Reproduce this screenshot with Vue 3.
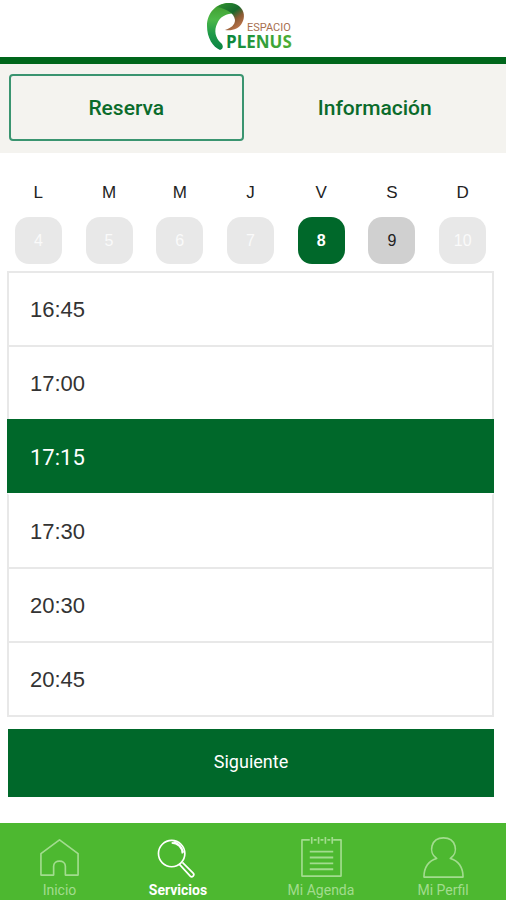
<script setup>
import { ref } from 'vue'

const tab = ref('Reserva')
const tabs = ['Reserva', 'Información']

const day = ref(8)
const days = [
  { letter: 'L', number: 4, open: false },
  { letter: 'M', number: 5, open: false },
  { letter: 'M', number: 6, open: false },
  { letter: 'J', number: 7, open: false },
  { letter: 'V', number: 8, open: true },
  { letter: 'S', number: 9, open: true },
  { letter: 'D', number: 10, open: false },
]

const time = ref('17:15')
const times = ['16:45', '17:00', '17:15', '17:30', '20:30', '20:45']
</script>

<template>
  <div class="app">
    <header class="header">
      <svg class="logo" viewBox="0 0 88 54" role="img" aria-label="Espacio Plenus">
        <defs>
          <linearGradient id="leaf" x1="0" y1="0" x2="0" y2="1">
            <stop offset="0" stop-color="#3f9a2c" />
            <stop offset="0.35" stop-color="#4cb848" />
            <stop offset="0.65" stop-color="#1f9a48" />
            <stop offset="1" stop-color="#0a8444" />
          </linearGradient>
          <linearGradient id="tip" gradientUnits="userSpaceOnUse" x1="14" y1="4" x2="32" y2="28">
            <stop offset="0" stop-color="#2c8c30" />
            <stop offset="0.45" stop-color="#17692c" />
            <stop offset="0.7" stop-color="#8a5a34" />
            <stop offset="1" stop-color="#c0764c" />
          </linearGradient>
          <linearGradient id="word" x1="0" y1="0" x2="1" y2="0">
            <stop offset="0" stop-color="#08843c" />
            <stop offset="0.5" stop-color="#2d9c3c" />
            <stop offset="1" stop-color="#4fae32" />
          </linearGradient>
        </defs>
        <path fill="url(#leaf)" d="M22 3C9 3 0 13 0 26C0 38 6 47 13 50C16 49 17 46 14 43C8 38 7 30 10 24C13 16 19 14 28 13C31 8 29 3 22 3Z" />
        <path fill="url(#tip)" d="M10 7C17 2 27 2 32 6C38 11 38 18 35 23C32 29 25 31 18 30C24 28 28 25 28 20C27 13 20 9 10 7Z" />
        <text class="logo-small" x="40" y="31">ESPACIO</text>
        <text class="logo-big" x="19" y="48" fill="url(#word)">PLENUS</text>
      </svg>
    </header>

    <div class="tabs">
      <button
        v-for="name in tabs"
        :key="name"
        type="button"
        class="tab"
        :class="{ active: tab === name }"
        :aria-pressed="tab === name"
        @click="tab = name"
      >{{ name }}</button>
    </div>

    <main class="main">
      <div class="week">
        <div v-for="d in days" :key="d.number" class="column">
          <span class="letter">{{ d.letter }}</span>
          <button
            type="button"
            class="day"
            :class="{ open: d.open, selected: day === d.number }"
            :disabled="!d.open"
            :aria-pressed="day === d.number"
            @click="day = d.number"
          >{{ d.number }}</button>
        </div>
      </div>

      <ul class="times">
        <li v-for="t in times" :key="t" class="slot" :class="{ selected: time === t }">
          <button
            type="button"
            class="time"
            :aria-pressed="time === t"
            @click="time = t"
          >{{ t }}</button>
        </li>
      </ul>

      <button type="button" class="next">Siguiente</button>
    </main>

    <nav class="nav">
      <a href="#inicio" class="link">
        <svg class="icon" viewBox="0 0 44 44" aria-hidden="true">
          <path d="M3 18L22 4L41 18V40H28V31C28 24 16 24 16 31V40H3Z" />
        </svg>
        <span>Inicio</span>
      </a>
      <a href="#servicios" class="link current" aria-current="page">
        <svg class="icon" viewBox="0 0 44 44" aria-hidden="true">
          <circle cx="15" cy="18" r="13.5" />
          <path d="M15 7C21 7 26 12 26 18M17 6C23 8 26 12 27 17" />
          <path d="M23 29L34 41C36 43 39 40 37 38L26 27" />
        </svg>
        <span>Servicios</span>
      </a>
      <a href="#agenda" class="link">
        <svg class="icon" viewBox="0 0 44 44" aria-hidden="true">
          <path d="M10 4H2V41H42V4H34M14 4H17M21 4H24M28 4H31M12 1V8M19 1V8M26 1V8M33 1V8" />
          <path class="lines" d="M10 16H34M10 22H34M10 28H34M10 34H34" />
        </svg>
        <span>Mi Agenda</span>
      </a>
      <a href="#perfil" class="link">
        <svg class="icon" viewBox="0 0 44 44" aria-hidden="true">
          <path d="M15 23C6 17 9 2 22 2C35 2 38 17 29 23C37 25 42 32 42 42H2C2 32 7 25 15 23Z" />
        </svg>
        <span>Mi Perfil</span>
      </a>
    </nav>
  </div>
</template>

<style>
body {
  margin: 0;
  background: #fff;
}
</style>

<style scoped>
.app {
  display: flex;
  flex-direction: column;
  min-height: 100vh;
  font-family: Roboto, "Liberation Sans", sans-serif;
  color: #222;
}

button {
  margin: 0;
  padding: 0;
  border: 0;
  font: inherit;
  cursor: pointer;
}

.header {
  display: flex;
  justify-content: center;
  padding: 0 4px 3px 0;
  border-bottom: 7px solid #00661b;
}

.logo {
  display: block;
  width: 88px;
  height: 54px;
}

.logo-small {
  font: 400 11px Roboto, sans-serif;
  fill: #a8704f;
}

.logo-big {
  font: 700 17px "Open Sans", sans-serif;
}

.tabs {
  display: grid;
  grid-template-columns: 1fr 1fr;
  gap: 14px;
  padding: 10px 14px 12px 9px;
  background: #f4f3ef;
}

.tab {
  height: 67px;
  border: 2px solid transparent;
  border-radius: 4px;
  background: none;
  font-size: 21px;
  font-weight: 500;
  color: #0a6b2b;
}

.tab.active {
  border-color: #3a9470;
}

.main {
  display: flex;
  flex-direction: column;
  padding: 30px 12px 26px 7px;
}

.week {
  display: grid;
  grid-template-columns: repeat(7, 1fr);
  margin: 0 -4px;
}

.column {
  display: flex;
  flex-direction: column;
  align-items: center;
  gap: 14px;
}

.letter {
  font-family: "Liberation Sans", sans-serif;
  font-size: 17px;
  line-height: 20px;
}

.day {
  width: 47px;
  height: 47px;
  border-radius: 14px;
  background: #e8e8e8;
  font-family: "Liberation Sans", sans-serif;
  font-size: 16px;
  color: #fafafa;
}

.day.open {
  background: #d0d0d0;
  color: #222;
}

.day.selected {
  background: #00682a;
  font-weight: 700;
  color: #fff;
}

.times {
  margin: 7px 0 0;
  padding: 0;
  list-style: none;
  border-bottom: 2px solid #e8e8e8;
}

.time {
  display: block;
  width: 100%;
  height: 74px;
  padding: 1px 21px 0;
  border: 2px solid #e8e8e8;
  border-bottom: 0;
  background: #fff;
  font-family: "Liberation Sans", sans-serif;
  font-size: 22px;
  text-align: left;
  color: #333;
}

.slot.selected .time {
  border-color: #00682a;
  background: #00682a;
  font-family: Roboto, sans-serif;
  color: #fff;
}

.slot.selected + .slot .time {
  border-top-color: #fff;
}

.next {
  height: 68px;
  margin: 12px 0 0 1px;
  padding-bottom: 4px;
  background: #00682a;
  font-size: 18px;
  color: #fff;
}

.nav {
  display: grid;
  grid-template-columns: 119fr 118fr 168fr 76fr;
  margin-top: auto;
  padding: 13px 25px 2px 0;
  background: #4db830;
}

.link {
  display: flex;
  flex-direction: column;
  align-items: center;
  gap: 2px;
  font-size: 14px;
  line-height: 18px;
  color: #a2dc8e;
  text-decoration: none;
  white-space: nowrap;
}

.icon {
  width: 43px;
  height: 43px;
  fill: none;
  stroke: currentColor;
  stroke-width: 1.7;
  stroke-linejoin: round;
}

.lines {
  stroke-width: 2;
}

.link.current {
  font-weight: 700;
  color: #fff;
}
</style>
